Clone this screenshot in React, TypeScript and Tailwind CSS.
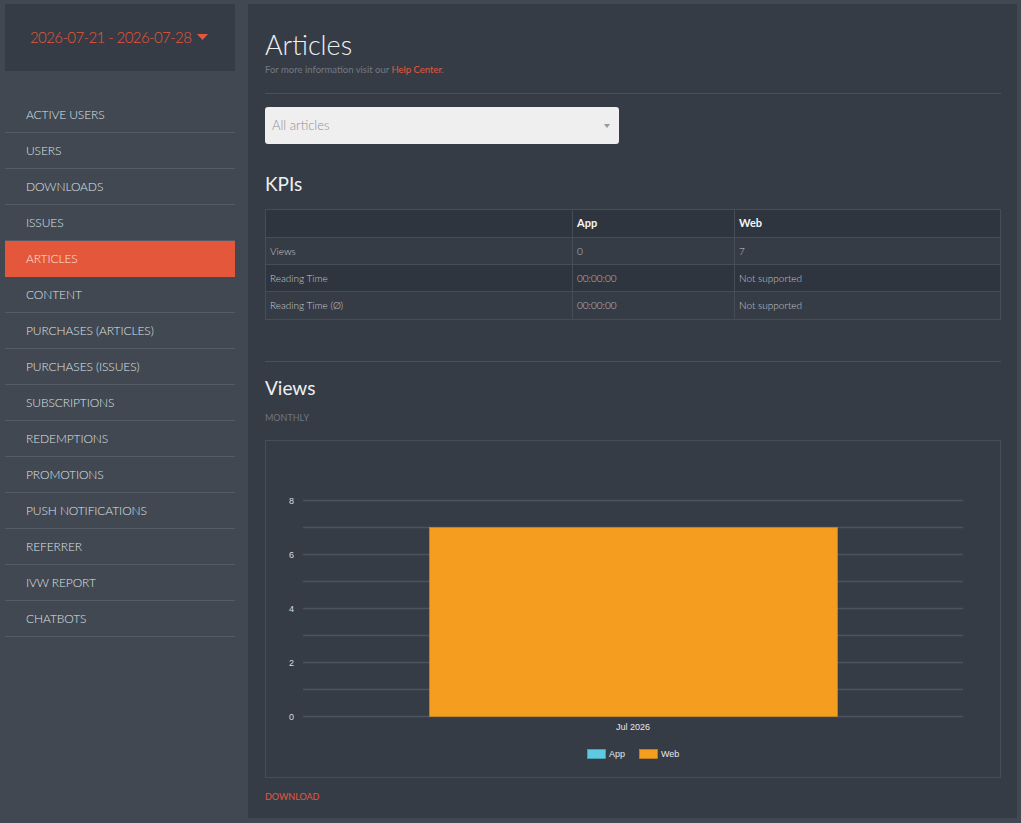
import React from "react";

const navItems = [
  "ACTIVE USERS",
  "USERS",
  "DOWNLOADS",
  "ISSUES",
  "ARTICLES",
  "CONTENT",
  "PURCHASES (ARTICLES)",
  "PURCHASES (ISSUES)",
  "SUBSCRIPTIONS",
  "REDEMPTIONS",
  "PROMOTIONS",
  "PUSH NOTIFICATIONS",
  "REFERRER",
  "IVW REPORT",
  "CHATBOTS",
];

const font = { fontFamily: "Lato, 'Open Sans', 'Noto Sans', sans-serif" };

function Chart() {
  const grid = [60, 87, 114, 141, 168, 195, 222, 249, 276];
  const labels = [
    { v: "8", y: 60 },
    { v: "6", y: 114 },
    { v: "4", y: 168 },
    { v: "2", y: 222 },
    { v: "0", y: 276 },
  ];
  return (
    <svg width="734" height="336" className="block" style={{ fontFamily: "'Liberation Sans', Arial, sans-serif" }}>
      {grid.map((y) => (
        <line key={y} x1="37" x2="697" y1={y - 0.5} y2={y - 0.5} stroke="#4d535c" strokeWidth="1.5" />
      ))}
      {labels.map((l) => (
        <text key={l.v} x="28" y={l.y + 3} textAnchor="end" fontSize="9" fill="#d9dce0">
          {l.v}
        </text>
      ))}
      <rect x="163.5" y="86.5" width="408" height="189" fill="#f49d1e" stroke="#d88a16" strokeWidth="0.6" />
      <text x="367" y="289" textAnchor="middle" fontSize="9" fill="#e6e8ea">
        Jul 2026
      </text>
      <rect x="321.5" y="308.5" width="18" height="9" fill="#5dc9e2" stroke="#4fb0c6" strokeWidth="0.6" />
      <text x="343" y="316" fontSize="9" fill="#e6e8ea">
        App
      </text>
      <rect x="373.5" y="308.5" width="18" height="9" fill="#f49d1e" stroke="#d88a16" strokeWidth="0.6" />
      <text x="395" y="316" fontSize="9" fill="#e6e8ea">
        Web
      </text>
    </svg>
  );
}

export default function App() {
  return (
    <div className="w-[1021px] h-[823px] bg-[#414851] flex pl-[5px] pt-[4px] overflow-hidden" style={font}>
      {/* Sidebar */}
      <div className="w-[230px] flex flex-col shrink-0">
        <div className="h-[67px] bg-[#363c46] flex items-center pl-[25px] whitespace-nowrap">
          <span className="text-[15px] font-light text-[#e5573a] tracking-[-0.6px]">2026-07-21 - 2026-07-28</span>
          <svg width="11" height="6" className="ml-[6px] mt-[-1px] shrink-0">
            <polygon points="0,0 11,0 5.5,6" fill="#e5573a" />
          </svg>
        </div>
        <div className="mt-[26px] flex flex-col">
          {navItems.map((item) => {
            const active = item === "ARTICLES";
            return (
              <div
                key={item}
                className={
                  active
                    ? "h-[36px] flex items-center pl-[21px] text-[12px] font-light tracking-[-0.1px] bg-[#e5573a] text-[#fde6df] border-b border-[#e5573a]"
                    : "h-[36px] flex items-center pl-[21px] text-[12px] font-light tracking-[-0.1px] text-[#dfe2e6] border-b border-[#565c65]"
                }
              >
                {item}
              </div>
            );
          })}
        </div>
      </div>

      {/* Main */}
      <div className="ml-[13px] w-[769px] h-[814px] bg-[#363c46] pl-[17px] pr-[16px] flex flex-col">
        <h1 className="mt-[26px] text-[27px] leading-[30px] font-light text-[#eef0f2]">Articles</h1>
        <p className="mt-[4px] text-[9.5px] leading-[12px] text-[#737a84]">
          For more information visit our <span className="text-[#e5573a]">Help Center</span>.
        </p>
        <div className="mt-[17px] h-px bg-[#4b515b]" />
        <div className="mt-[13px] w-[354px] h-[37px] bg-[#efefef] rounded-[3px] flex items-center pl-[7px] pr-[9px] justify-between">
          <span className="text-[13px] font-light text-[#8f8f8f]">All articles</span>
          <svg width="6" height="4">
            <polygon points="0,0 6,0 3,4" fill="#999" />
          </svg>
        </div>

        <h2 className="mt-[28px] text-[19px] leading-[24px] text-[#eef0f2]">KPIs</h2>
        <div className="mt-[13px] w-[736px] border border-[#474d57] text-[10px] font-light text-[#c3c7cd]">
          <div className="flex h-[28px] bg-[#2f353e] border-b border-[#474d57]">
            <div className="w-[307px] border-r border-[#474d57]" />
            <div className="w-[162px] border-r border-[#474d57] pl-[4px] flex items-center font-bold text-[11px] text-[#f4f5f6]">App</div>
            <div className="flex-1 pl-[4px] flex items-center font-bold text-[11px] text-[#f4f5f6]">Web</div>
          </div>
          {[
            ["Views", "0", "7", "bg-[#363c46]"],
            ["Reading Time", "00:00:00", "Not supported", "bg-[#2f353e]"],
            ["Reading Time (Ø)", "00:00:00", "Not supported", "bg-[#363c46]"],
          ].map(([a, b, c, bg], i) => (
            <div key={i} className={`flex h-[27px] ${bg} ${i < 2 ? "border-b border-[#474d57]" : ""}`}>
              <div className="w-[307px] border-r border-[#474d57] pl-[4px] flex items-center">{a}</div>
              <div className="w-[162px] border-r border-[#474d57] pl-[4px] flex items-center">{b}</div>
              <div className="flex-1 pl-[4px] flex items-center">{c}</div>
            </div>
          ))}
        </div>

        <div className="mt-[41px] h-px bg-[#4b515b]" />
        <h2 className="mt-[14px] text-[19px] leading-[24px] text-[#eef0f2]">Views</h2>
        <p className="mt-[12px] text-[9px] leading-[12px] text-[#6f7680]">MONTHLY</p>
        <div className="mt-[16px] w-[736px] h-[338px] border border-[#474d57]">
          <Chart />
        </div>
        <p className="mt-[13px] text-[9px] leading-[12px] text-[#e5573a]">DOWNLOAD</p>
      </div>
    </div>
  );
}
